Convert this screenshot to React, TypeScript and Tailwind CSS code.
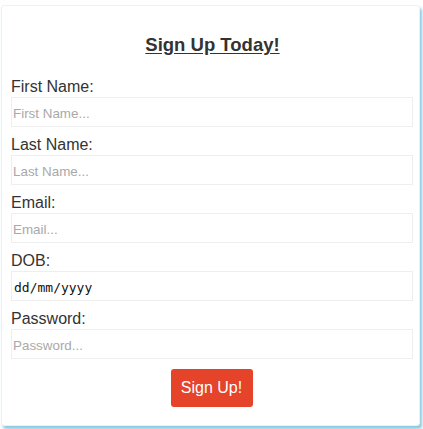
const fields = [
  { label: "First Name:", placeholder: "First Name...", type: "text" },
  { label: "Last Name:", placeholder: "Last Name...", type: "text" },
  { label: "Email:", placeholder: "Email...", type: "email" },
  { label: "DOB:", placeholder: "", type: "date" },
  { label: "Password:", placeholder: "Password...", type: "password" },
];

const App = () => {
  return (
    <div className="min-h-screen bg-white pl-px pt-[5px] font-['Liberation_Sans',Arial,sans-serif]">
      <form className="w-[419px] rounded-[3px] border border-[#f0f0f0] bg-white pb-[18px] pl-[9px] pr-[5px] pt-[28px] shadow-[2px_3px_3px_rgba(100,180,215,0.75)]">
        <h2 className="mb-[22px] text-center text-[18.5px] font-bold leading-[22px] text-[#333] underline underline-offset-2">
          Sign Up Today!
        </h2>
        {fields.map((f) => (
          <div key={f.label} className="mb-[9px]">
            <label className="block text-[16px] leading-[18px] text-[#333]">{f.label}</label>
            {f.type === "date" ? (
              <input
                type="text"
                defaultValue="dd/mm/yyyy"
                className="mt-px block h-[30px] w-[402px] border border-[#eeeeee] px-[2px] pt-[2px] font-['DejaVu_Sans_Mono',monospace] text-[13px] text-[#111] outline-none"
              />
            ) : (
              <input
                type={f.type}
                placeholder={f.placeholder}
                className="mt-px block h-[30px] w-[402px] border border-[#eeeeee] px-px pt-[2px] text-[13.4px] text-[#333] outline-none placeholder:text-[#a9a9a9]"
              />
            )}
          </div>
        ))}
        <div className="flex justify-center pr-[2px] pt-[1px]">
          <button
            type="button"
            className="h-[38px] w-[82px] rounded-[3px] bg-[#e5432a] text-[16px] text-white"
          >
            Sign Up!
          </button>
        </div>
      </form>
    </div>
  );
};

export default App;
